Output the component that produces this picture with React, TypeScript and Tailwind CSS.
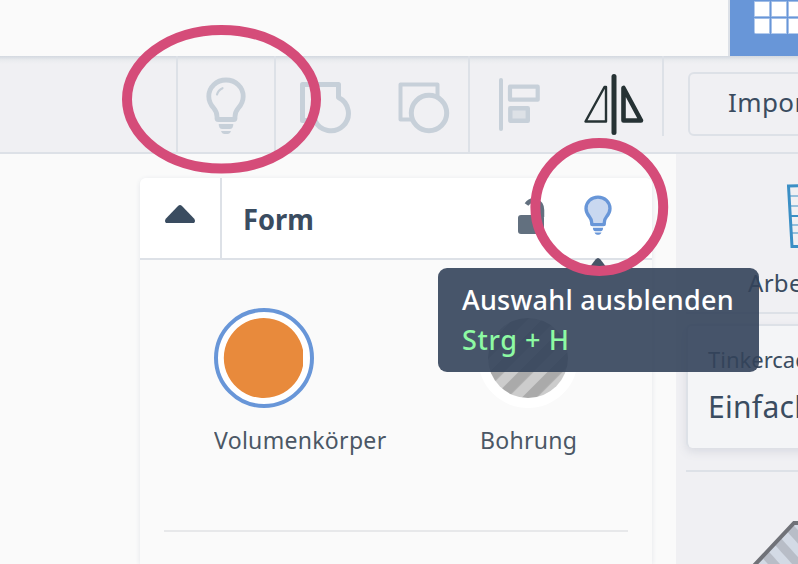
import React from "react";

function Bulb({ className, fill, shine }: { className: string; fill: string; shine?: boolean }) {
  return (
    <svg className={className} viewBox="0 0 40 56" fill="none">
      <path
        d="M20 3C10.400 3 2.800 10.200 2.800 19.400c0 5 2.200 8.600 5 11.900 2.400 2.900 3.200 5 3.200 8.500v1.500q0 1.200 1.200 1.200h15.600q1.200 0 1.200-1.200v-1.500c0-3.500.800-5.600 3.200-8.500 2.800-3.300 5-6.900 5-11.900C37.200 10.200 29.600 3 20 3Z"
        fill={fill} stroke="currentColor" strokeWidth="4.800" strokeLinejoin="round"
      />
      {shine && <path d="M11 17.500q1.200-4.500 5.500-6.300" stroke="currentColor" strokeWidth="2.200" strokeLinecap="round" />}
      <path d="M12.700 47h14.600q0 5-3.500 5h-7.600q-3.500 0-3.500-5Z" fill="currentColor" />
      <path d="M15 54h10q-1 3-3.500 3h-3q-2.500 0-3.500-3Z" fill="currentColor" />
    </svg>
  );
}

function Toolbar() {
  return (
    <div className="flex h-[98px] border-b-2 border-[#dde1e7] bg-[linear-gradient(#d3d8e0,#e9ebee_4px,#f0f0f3_8px)] text-[#c7d0d9]">
      <div className="w-[178px] shrink-0 border-r-2 border-[#dde1e7]" />
      <div className="flex w-[98px] shrink-0 justify-center border-r-2 border-[#dde1e7] pt-[21px]">
        <Bulb className="h-[56px] w-10 shrink-0 overflow-visible" fill="none" shine />
      </div>
      <div className="flex w-[194px] shrink-0 gap-[46px] border-r-2 border-[#dde1e7] pl-6 pt-[26px]">
        <svg className="h-[52px] w-[52px] shrink-0" viewBox="0 0 52 52" fill="none" stroke="currentColor" strokeWidth="5" strokeLinejoin="round">
          <path d="M2.500 2.500H38.500V15.500A17.500 17.500 0 1 1 15 38.500H2.500Z" />
        </svg>
        <svg className="h-[52px] w-[54px] shrink-0" viewBox="0 0 54 52" fill="none" stroke="currentColor" strokeLinejoin="round">
          <path d="M15 37.500H2.500V2.500H39.500V15" strokeWidth="4" />
          <circle cx="31" cy="31" r="17.700" strokeWidth="5" />
        </svg>
      </div>
      <div className="flex h-20 w-[194px] shrink-0 gap-[43px] border-r-2 border-[#dde1e7] pl-7 pt-[17px]">
        <svg className="h-[62px] w-[42px] shrink-0" viewBox="0 0 42 62" fill="none" stroke="currentColor" strokeLinejoin="round">
          <path d="M3 7V56" strokeWidth="4" strokeLinecap="round" />
          <rect x="12" y="13.700" width="27.700" height="13" strokeWidth="4.200" />
          <rect x="12.300" y="35.300" width="17.500" height="12.500" fill="#dde1e6" strokeWidth="4.400" />
        </svg>
        <svg className="h-[62px] w-[62px] shrink-0" viewBox="0 0 62 62" fill="none" stroke="#263234" strokeLinejoin="round" strokeLinecap="round">
          <path d="M31 3.500V59.500" strokeWidth="5" />
          <path d="M21.500 14L2.500 48.500H23V14Z" strokeWidth="2.400" />
          <path d="M40.500 15V47.500H58Z" strokeWidth="4.600" />
        </svg>
      </div>
      <div className="shrink-0 pl-6 pt-4">
        <div className="h-16 w-60 rounded-md border-2 border-[#dde1e7] pl-[38px] text-[26px] leading-[56px] tracking-[0.4px] text-[#3a4c60]">
          Import
        </div>
      </div>
    </div>
  );
}

function ShapePanel() {
  return (
    <div className="ml-[140px] mt-6 w-[512px] rounded-t-md bg-[#fafafa] shadow-[0_1px_5px_#e3e5ea]">
      <div className="flex h-[82px] rounded-t-md border-b-2 border-[#dde1e7] bg-white">
        <div className="w-[82px] border-r-2 border-[#dde1e7] pl-[25px] pt-[26px]">
          <svg className="h-5 w-[30px]" viewBox="0 0 30 20">
            <path d="M13 2q2-2 4 0L29 14.500q2 2.500 0 4.500H1q-2-2 0-4.500Z" fill="#3a4c60" />
          </svg>
        </div>
        <div className="w-[295px] pl-[21px] text-[29px] font-bold leading-[81px] text-[#3a4c60]">
          <span className="inline-block origin-left scale-x-[0.94]">Form</span>
        </div>
        <svg className="mt-[19px] h-[38px] w-[28px]" viewBox="0 0 28 38" fill="none">
          <path d="M9.500 7.500C15 0 25 4 25 13V20" stroke="#62707f" strokeWidth="4.500" />
          <rect x="1" y="18" width="26" height="19" rx="3" fill="#62707f" />
        </svg>
        <Bulb className="ml-[39px] mt-[17px] h-[39px] w-[28px] overflow-visible text-[#6896d8]" fill="#c9d8f0" />
      </div>
      <div className="flex pl-[74px] pt-12 text-[24px] leading-6 text-[#4b5765]">
        <div className="w-[252px]">
          <svg className="h-[100px] w-[100px]" viewBox="0 0 100 100">
            <circle cx="50" cy="50" r="48" fill="#fff" stroke="#6896d8" strokeWidth="4" />
            <path d="M89 42A40 40 0 1 0 89 58Z" fill="#e88a3c" />
          </svg>
          <div className="origin-left scale-x-[0.96] pt-5 tracking-[0.3px]">Volumenkörper</div>
        </div>
        <div className="pl-[12px]">
          <svg className="h-[100px] w-[100px]" viewBox="0 0 100 100">
            <defs>
              <pattern id="hole" width="20.500" height="20.500" patternUnits="userSpaceOnUse" patternTransform="translate(20.500 84) rotate(45)">
                <rect width="20.500" height="20.500" fill="#ccc" />
                <rect width="10.500" height="20.500" fill="#aaa" />
              </pattern>
            </defs>
            <circle cx="50" cy="50" r="50" fill="#fff" />
            <circle cx="50" cy="50" r="40" fill="url(#hole)" />
          </svg>
          <div className="origin-left scale-x-[0.96] pl-0.5 pt-5 tracking-[0.3px]">Bohrung</div>
        </div>
      </div>
      <div className="mx-6 mt-[78px] h-0.5 bg-[#e7e8ea]" />
      <div className="h-8" />
    </div>
  );
}

function Sidebar() {
  return (
    <div className="h-[410px] w-[122px] overflow-hidden whitespace-nowrap bg-[#f0f0f3] pl-[10px] text-[#3a4c60]">
      <svg className="ml-[100px] mt-7 h-[72px] w-20" viewBox="0 0 80 72" fill="none" stroke="#3b8fc5">
        <path d="M4 14H76M5 24H76M6 43H76M6 51H76" strokeWidth="1" />
        <path d="M5 34H76" strokeWidth="2" />
        <path d="M2.500 4L76 3V64.500H6Z" strokeWidth="3" />
      </svg>
      <div className="ml-[62px] mt-[17px] text-[24px] leading-6 tracking-[0.3px]">Arbeitsebene</div>
      <div className="mt-[17px] h-0.5 bg-[#dde1e7]" />
      <div className="mt-[10px] h-[124px] w-60 rounded-md border-2 border-b-0 border-[#dde1e7] bg-[#f4f5f7] pl-5 pt-[21px] shadow-[0_4px_10px_#d9dbe2]">
        <div className="text-[22px] leading-6">Tinkercad</div>
        <div className="pt-[16px] text-[30px] leading-10 tracking-[0.3px]">Einfache Formen</div>
      </div>
      <div className="mt-[22px] h-0.5 bg-[#dde1e7]" />
      <svg className="ml-[52px] mt-8 h-[60px] w-[60px]" viewBox="0 0 60 60">
        <defs>
          <pattern id="box" width="18" height="18" patternUnits="userSpaceOnUse" patternTransform="translate(41 32) rotate(48)">
            <rect width="18" height="18" fill="#d3dae5" />
            <rect width="18" height="9" fill="#b8bdc7" />
          </pattern>
        </defs>
        <path d="M10 68L56 19H80V68Z" fill="url(#box)" stroke="#707278" strokeWidth="4" />
      </svg>
    </div>
  );
}

export default function App() {
  return (
    <div className="relative h-[564px] w-[798px] overflow-hidden bg-[#fafafa] font-['Noto_Sans',sans-serif]">
      <div className="flex h-14 justify-end">
        <div className="w-[70px] border-l-2 border-[#dde1e7] bg-[#6896d8] pl-6">
          <svg className="h-[34px] w-[52px]" viewBox="0 0 52 34">
            <rect x="0" y="-10" width="70" height="44" rx="2" fill="#b4cbed" />
            <path d="M1 2H15V16H1ZM18 2H32V16H18ZM35 2H49V16H35ZM1 19H15V33H1ZM18 19H32V33H18ZM35 19H49V33H35Z" fill="#fff" />
            <path d="M16.500 0V34M33.500 0V34M0 17.500H52M0 .5H52" stroke="#6896d8" strokeWidth="1.300" />
          </svg>
        </div>
      </div>
      <Toolbar />
      <div className="flex h-[410px] overflow-hidden">
        <div className="w-[676px]"><ShapePanel /></div>
        <Sidebar />
      </div>
      <svg className="absolute left-[588px] top-[257px] h-[11px] w-5" viewBox="0 0 20 11">
        <path d="M1 11L7.500 2.500q2.500-3 5 0L19 11Z" fill="#475466" />
      </svg>
      <div className="absolute left-[438px] top-[268px] h-[104px] w-[321px] whitespace-nowrap rounded-[9px] bg-[#33425a]/90 pl-6 pt-[12px] text-[27px] font-medium leading-10 text-white">
        <div className="tracking-[0.25px]">Auswahl ausblenden</div>
        <div className="tracking-[0.6px] text-[#8dfaa3]">Strg + H</div>
      </div>
      <svg className="absolute inset-0 h-[564px] w-[798px]" viewBox="0 0 798 564" fill="none" stroke="#d54c79" strokeWidth="10">
        <ellipse cx="221.500" cy="99.200" rx="94.500" ry="69.300" />
        <circle cx="599.300" cy="207" r="63.900" />
      </svg>
    </div>
  );
}
